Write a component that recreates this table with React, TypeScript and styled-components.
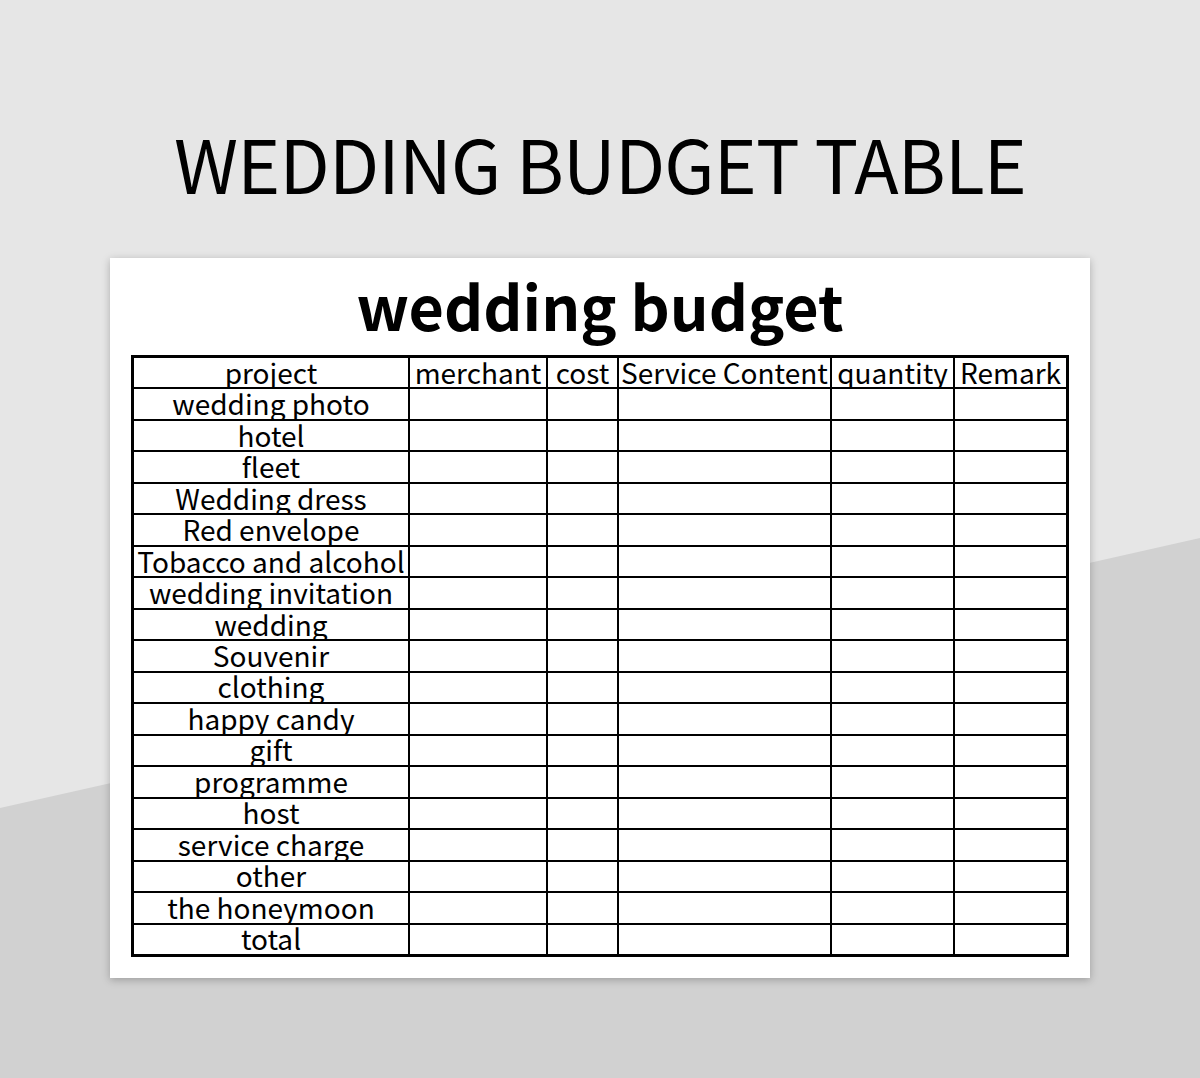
import React from "react";
import styled, { createGlobalStyle } from "styled-components";

const GlobalStyle = createGlobalStyle`
  html, body {
    margin: 0;
    padding: 0;
  }
  body {
    font-family: "Noto Sans CJK SC", "Noto Sans", sans-serif;
    color: #000;
  }
`;

const Page = styled.div({
  position: "relative",
  width: 1200,
  height: 1078,
  overflow: "hidden",
  backgroundColor: "#e6e6e6",
  display: "flex",
  flexDirection: "column",
  alignItems: "center",
  "&::before": {
    content: '""',
    position: "absolute",
    inset: 0,
    backgroundColor: "#d1d1d1",
    clipPath: "polygon(0 808px, 100% 538px, 100% 100%, 0 100%)",
  },
});

const Heading = styled.h1({
  position: "relative",
  margin: 0,
  marginTop: 112,
  height: 146,
  fontSize: 73,
  fontWeight: 400,
  lineHeight: "100px",
  letterSpacing: -0.8,
  whiteSpace: "nowrap",
});

const Sheet = styled.div({
  position: "relative",
  width: 980,
  height: 720,
  boxSizing: "border-box",
  padding: "0 21px 21px",
  backgroundColor: "#fff",
  boxShadow: "0 2px 8px rgba(0,0,0,0.25)",
  display: "flex",
  flexDirection: "column",
  alignItems: "center",
});

const SheetTitle = styled.h2({
  margin: 0,
  height: 97,
  fontSize: 61,
  fontWeight: 700,
  lineHeight: "94px",
  whiteSpace: "nowrap",
});

const Grid = styled.div({
  width: 938,
  height: 602,
  boxSizing: "border-box",
  border: "3px solid #000",
  backgroundColor: "#000",
  display: "grid",
  gridTemplateColumns: "274px 136px 69px 211px 121px 111px",
  gridTemplateRows: "repeat(19, 1fr)",
  gap: 2,
});

const Cell = styled.div({
  backgroundColor: "#fff",
  display: "flex",
  alignItems: "center",
  justifyContent: "center",
  paddingBottom: 2,
  fontSize: 28,
  lineHeight: "24px",
  whiteSpace: "nowrap",
  overflow: "visible",
});

const columns = ["project", "merchant", "cost", "Service Content", "quantity", "Remark"];

const items = [
  "wedding photo",
  "hotel",
  "fleet",
  "Wedding dress",
  "Red envelope",
  "Tobacco and alcohol",
  "wedding invitation",
  "wedding",
  "Souvenir",
  "clothing",
  "happy candy",
  "gift",
  "programme",
  "host",
  "service charge",
  "other",
  "the honeymoon",
  "total",
];

function App() {
  return (
    <>
      <GlobalStyle />
      <Page>
        <Heading>WEDDING BUDGET TABLE</Heading>
        <Sheet>
          <SheetTitle>wedding budget</SheetTitle>
          <Grid>
            {columns.map((c) => (
              <Cell key={c}>{c}</Cell>
            ))}
            {items.map((item) => (
              <React.Fragment key={item}>
                <Cell>{item}</Cell>
                {columns.slice(1).map((c) => (
                  <Cell key={c} />
                ))}
              </React.Fragment>
            ))}
          </Grid>
        </Sheet>
      </Page>
    </>
  );
}

export default App;
